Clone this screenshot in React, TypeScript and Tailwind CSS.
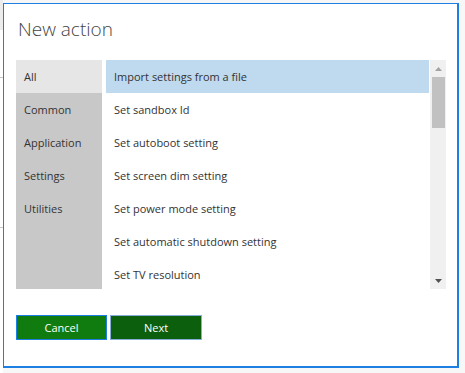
import React from "react";

const categories = ["All", "Common", "Application", "Settings", "Utilities"];
const actions = [
  "Import settings from a file",
  "Set sandbox Id",
  "Set autoboot setting",
  "Set screen dim setting",
  "Set power mode setting",
  "Set automatic shutdown setting",
  "Set TV resolution",
];

export default function App() {
  return (
    <div
      className="w-[465px] h-[373px] bg-[#f7f7f7] flex overflow-hidden"
      style={{ fontFamily: '"Open Sans", "Noto Sans", sans-serif' }}
    >
      <div className="w-[3px] h-full flex flex-col shrink-0">
        <div className="h-[30px] bg-[#ececec]" />
        <div className="h-[48px] bg-white border-b border-[#c8c8c8]" />
        <div className="h-[150px] bg-white border-b border-[#c8c8c8]" />
        <div className="flex-1 bg-white" />
      </div>
      <div className="mt-[3px] w-[456px] h-[365px] bg-white border-l border-t border-r-2 border-b-2 border-[#1d7fe2] flex flex-col pl-[12px]">
        <div className="h-[56px] pl-[2px] pt-[12px] text-[19px] font-light text-[#444] leading-[26px]">
          New action
        </div>
        <div className="flex h-[229px]">
          <div className="w-[86px] bg-[#c8c8c8] flex flex-col">
            {categories.map((c, i) => (
              <div
                key={c}
                className={`h-[33px] flex items-center pl-[8px] pt-[2px] text-[11px] text-[#333] ${
                  i === 0 ? "bg-[#e6e6e6]" : ""
                }`}
              >
                {c}
              </div>
            ))}
          </div>
          <div className="w-[323px] ml-[4px] mr-[1px] flex flex-col overflow-hidden">
            {actions.map((a, i) => (
              <div
                key={a}
                className={`h-[33px] shrink-0 flex items-center pl-[8px] pt-[2px] text-[11px] text-[#333] ${
                  i === 0 ? "bg-[#bfd9ef]" : ""
                }`}
              >
                {a}
              </div>
            ))}
          </div>
          <div className="w-[16px] bg-[#f0f0f0] flex flex-col items-center">
            <div className="h-[17px] flex items-center justify-center">
              <svg width="7" height="4" viewBox="0 0 7 4">
                <path d="M0 4 L3.5 0 L7 4 Z" fill="#a3a3a3" />
              </svg>
            </div>
            <div className="w-[13px] h-[51px] bg-[#c1c1c1]" />
            <div className="flex-1" />
            <div className="h-[17px] flex items-center justify-center">
              <svg width="7" height="4" viewBox="0 0 7 4">
                <path d="M0 0 L7 0 L3.5 4 Z" fill="#505050" />
              </svg>
            </div>
          </div>
        </div>
        <div className="flex gap-[3px] mt-[26px]">
          <button className="w-[91px] h-[25px] pt-[1px] bg-[#107c10] border border-[#1d7fe2] text-white text-[11px]">
            Cancel
          </button>
          <button className="w-[92px] h-[25px] pt-[1px] bg-[#0c5f0c] border border-[#86aed8] text-white text-[11px]">
            Next
          </button>
        </div>
      </div>
    </div>
  );
}
